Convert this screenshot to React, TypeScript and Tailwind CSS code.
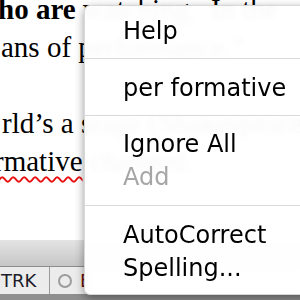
import React from "react";

export default function App() {
  const serif = { fontFamily: '"Liberation Serif", "Times New Roman", serif' };
  const sans = { fontFamily: '"DejaVu Sans", "Lucida Grande", sans-serif' };
  return (
    <div className="relative w-[300px] h-[300px] overflow-hidden bg-white">
      {/* document page */}
      <div className="h-[240px] bg-white overflow-hidden text-black text-[29px] leading-[38px]" style={serif}>
        <div className="mt-[-10px] whitespace-nowrap">
          <span className="ml-[-2px] font-bold">ho are</span> watching.&nbsp; In the
        </div>
        <div className="whitespace-nowrap pl-[1px]">ans of performance.”</div>
        <div className="h-[38px]" />
        <div className="whitespace-nowrap pl-[2px]">rld’s a stage (Shakespeare). As I</div>
        <div className="whitespace-nowrap ml-[-6px]">
          <span className="underline decoration-wavy decoration-[#e81010] decoration-[1.5px] underline-offset-[5px]">rmative</span> changed.
        </div>
      </div>
      {/* gray band */}
      <div className="h-[26px] bg-gradient-to-b from-[#e4e4e4] to-[#c6c6c6]" />
      {/* status bar */}
      <div className="h-[28px] border-t border-[#8c8c8c] bg-[#ececec] flex items-center" style={sans}>
        <div className="w-[50px] h-full flex items-center text-[18px] text-[#1c1c2a] pl-[1px] border-r border-[#9a9a9a]">TRK</div>
        <div className="ml-[8px] w-[14px] h-[14px] rounded-full border-2 border-[#9c9c9c]" />
        <div className="ml-[8px] text-[18px] text-[#6a1010]">E</div>
      </div>
      <div className="h-[6px] bg-[#8f8f8f]" />

      {/* context menu */}
      <div
        className="absolute left-[84px] top-[5px] w-[240px] h-[290px] rounded-[6px] bg-white/[0.97] backdrop-blur-[3px] border border-black/15 shadow-[0_3px_10px_rgba(0,0,0,0.4)] text-[24px] leading-[33px] text-black"
        style={sans}
      >
        <div className="pt-[9px] pb-[10px] pl-[38px]">Help</div>
        <div className="h-px bg-[#d9d9d9]" />
        <div className="pt-[13px] pb-[10px] pl-[38px] whitespace-nowrap">per formative</div>
        <div className="h-px bg-[#d9d9d9]" />
        <div className="pt-[12px] pb-[11px] pl-[38px] whitespace-nowrap">
          <div>Ignore All</div>
          <div className="text-[#a6a6a6]">Add</div>
        </div>
        <div className="h-px bg-[#d9d9d9]" />
        <div className="pt-[13px] pl-[38px] whitespace-nowrap">
          <div>AutoCorrect</div>
          <div>Spelling...</div>
        </div>
      </div>
    </div>
  );
}
